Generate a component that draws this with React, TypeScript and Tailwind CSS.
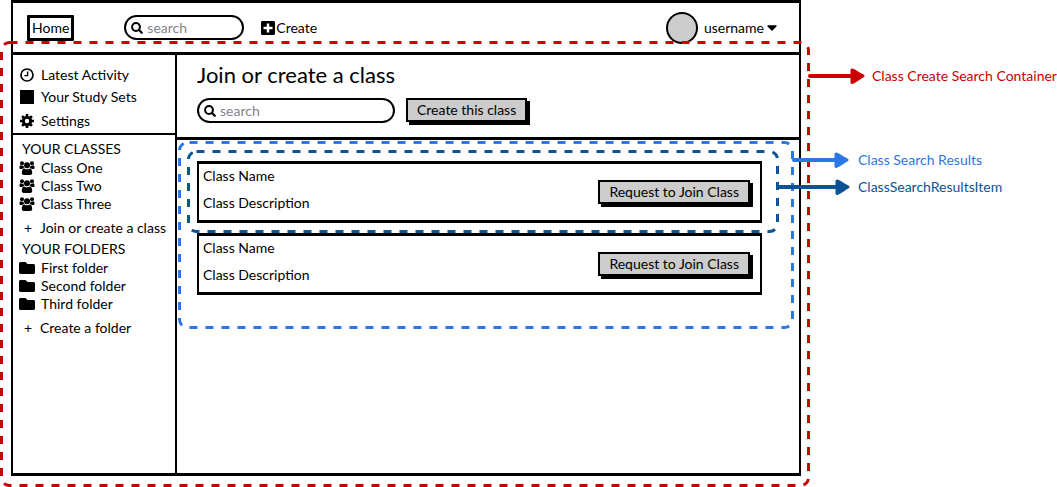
import type { ReactNode } from "react";
import { FaFolder, FaPlusSquare } from "react-icons/fa";

function DashedOutline({ className, phase }: { className: string; phase: number }) {
  return (
    <div className={`pointer-events-none absolute ${className}`} aria-hidden="true">
      <svg className="block h-full w-full overflow-visible" fill="none" stroke="currentColor" strokeWidth="3">
        <rect x="0.5" y="0.5" width="100%" height="100%" rx="8" strokeDasharray="8 8" strokeDashoffset={phase} />
      </svg>
    </div>
  );
}

function Arrow({ length }: { length: number }) {
  return (
    <svg width={length} height="18" viewBox={`0 0 ${length} 18`} className="shrink-0 overflow-visible" aria-hidden="true">
      <path d={`M1 9H${length - 10}`} stroke="currentColor" strokeWidth="4" strokeLinecap="round" />
      <path
        d={`M${length - 12} 3C${length - 9} 3.5 ${length - 6} 7 ${length - 1} 9C${length - 5} 11 ${length - 7} 13.5 ${length - 12} 15.5Z`}
        fill="currentColor"
        stroke="currentColor"
        strokeWidth="3"
        strokeLinejoin="round"
      />
    </svg>
  );
}

function ClockIcon() {
  return (
    <svg width="14" height="14" viewBox="0 0 14 14" fill="none" stroke="currentColor" strokeWidth="1.7" aria-hidden="true">
      <circle cx="7" cy="7" r="6" />
      <path d="M7.6 3.4V7.6H4.4" strokeWidth="1.4" />
    </svg>
  );
}

function GearIcon() {
  return (
    <svg width="14" height="14" viewBox="0 0 14 14" fill="none" stroke="currentColor" aria-hidden="true">
      <circle cx="7" cy="7" r="3.7" strokeWidth="3" />
      <path d="M7 0V3M7 11V14M0 7H3M11 7H14M2.05 2.05L4.2 4.2M9.8 9.8L11.95 11.95M2.05 11.95L4.2 9.8M9.8 4.2L11.95 2.05" strokeWidth="2.6" />
    </svg>
  );
}

function SearchIcon() {
  return (
    <svg width="12" height="12" viewBox="0 0 12 12" className="shrink-0" fill="none" stroke="currentColor" strokeWidth="2" strokeLinecap="round" aria-hidden="true">
      <circle cx="5" cy="5" r="3.9" />
      <path d="M8 8L10.8 10.8" strokeWidth="2.2" />
    </svg>
  );
}

function GroupIcon() {
  return (
    <svg width="16" height="14" viewBox="0 0 16 14" fill="currentColor" className="shrink-0 overflow-visible" aria-hidden="true">
      <circle cx="3" cy="2.2" r="2" />
      <circle cx="13" cy="2.2" r="2" />
      <circle cx="8" cy="4.2" r="3" />
      <path d="M0.5 6.4C0.5 5 0.9 4.3 1.6 4.3C2.4 4.9 3.6 4.9 4.5 4.4C4.5 5.6 4.8 6.4 5.4 7.1C4.4 7.2 3.7 7.4 3.2 8H1.8C0.9 8 0.5 7.5 0.5 6.4Z" />
      <path d="M15.5 6.4C15.5 5 15.1 4.3 14.4 4.3C13.6 4.9 12.4 4.9 11.5 4.4C11.5 5.6 11.2 6.4 10.6 7.1C11.6 7.2 12.3 7.4 12.8 8H14.2C15.1 8 15.5 7.5 15.5 6.4Z" />
      <path d="M2.8 12C2.8 9.3 3.7 7.4 5.3 7.4C6.2 8 7 8.3 8 8.3S9.8 8 10.7 7.4C12.3 7.4 13.2 9.3 13.2 12C13.2 13.3 12.4 14 11.2 14H4.8C3.6 14 2.8 13.3 2.8 12Z" />
    </svg>
  );
}

function SearchField({ className, label }: { className: string; label: string }) {
  return (
    <label className={`flex h-[25px] items-center gap-1 rounded-full border-2 border-black bg-white pl-[5px] ${className}`}>
      <SearchIcon />
      <input
        type="search"
        aria-label={label}
        placeholder="search"
        className="h-5 w-full min-w-0 bg-transparent pr-3 leading-5 outline-none placeholder:text-[#84848c]"
      />
    </label>
  );
}

function SketchButton({ children }: { children: ReactNode }) {
  return (
    <button className="h-6 shrink-0 border-2 border-black bg-[#cccccc] px-[9px] leading-5 shadow-[3px_3px_0_#000]">{children}</button>
  );
}

function NavItem({ icon, children }: { icon: ReactNode; children: ReactNode }) {
  return (
    <li>
      <a href="#" className="flex items-center gap-[6px] pl-[6px]">
        <span className="flex w-4 shrink-0 justify-center">{icon}</span>
        {children}
      </a>
    </li>
  );
}

function AddItem({ children }: { children: ReactNode }) {
  return (
    <a href="#" className="mt-[6px] flex gap-2 pl-[11px] whitespace-nowrap">
      <span className="w-2">+</span>
      {children}
    </a>
  );
}

const classes = ["Class One", "Class Two", "Class Three"];
const folders = ["First folder", "Second folder", "Third folder"];

function Header() {
  return (
    <header className="flex h-[52px] shrink-0 items-center border-b-[3px] border-black pr-[22px] pl-[14px]">
      <a href="#" className="h-[26px] rounded-[1px] border-[3px] border-black px-[2px] leading-5">Home</a>
      <SearchField className="ml-[50px] w-[120px]" label="Search sets" />
      <button className="ml-4 flex items-center">
        <FaPlusSquare className="size-4" aria-hidden="true" />
        Create
      </button>
      <div className="ml-auto flex items-center gap-[6px]">
        <span className="size-8 rounded-full border-2 border-black bg-[#cccccc]" />
        <button className="flex items-center gap-[3px]">
          username
          <svg width="10" height="6" viewBox="0 0 10 6" aria-hidden="true">
            <path d="M1 1H9L5 5Z" stroke="currentColor" strokeWidth="1.4" strokeLinejoin="round" />
          </svg>
        </button>
      </div>
    </header>
  );
}

function Sidebar() {
  return (
    <nav className="w-[164px] shrink-0 border-r-2 border-black">
      <div className="border-b-2 border-black pt-[11px] pb-[3px]">
        <ul className="flex flex-col gap-1">
          <NavItem icon={<ClockIcon />}>Latest Activity</NavItem>
          <NavItem icon={<span className="size-[14px] bg-black" />}>Your Study Sets</NavItem>
        </ul>
        <ul className="mt-[6px]">
          <NavItem icon={<GearIcon />}>Settings</NavItem>
        </ul>
      </div>
      <h2 className="mt-[5px] mb-px pl-[9px]">YOUR CLASSES</h2>
      <ul>
        {classes.map((name) => (
          <NavItem key={name} icon={<GroupIcon />}>{name}</NavItem>
        ))}
      </ul>
      <AddItem>Join or create a class</AddItem>
      <h2 className="mt-[3px] mb-px pl-[9px]">YOUR FOLDERS</h2>
      <ul>
        {folders.map((name) => (
          <NavItem key={name} icon={<FaFolder className="size-4" />}>{name}</NavItem>
        ))}
      </ul>
      <AddItem>Create a folder</AddItem>
    </nav>
  );
}

function ClassResult({ outlined }: { outlined: boolean }) {
  return (
    <li className="relative">
      <article className="flex h-[62px] items-start justify-between border-x-2 border-y-[3px] border-black pr-[10px] pl-1">
        <div className="flex flex-col gap-[9px] pt-[3px]">
          <h3>Class Name</h3>
          <p>Class Description</p>
        </div>
        <div className="pt-4">
          <SketchButton>Request to Join Class</SketchButton>
        </div>
      </article>
      {outlined && <DashedOutline className="-top-[10px] -right-[15px] -bottom-2 -left-[9px] text-[#0b5394]" phase={0} />}
    </li>
  );
}

export default function App() {
  return (
    <div className="relative flex min-h-screen bg-white pb-[11px] pl-[11px] font-['Lato',sans-serif] text-[14px] leading-[18px] text-black">
      <div className="flex min-w-0 flex-1 flex-col border-x-2 border-y-[3px] border-black">
        <Header />
        <div className="flex flex-1">
          <Sidebar />
          <main className="min-w-0 flex-1">
            <section className="border-b-[3px] border-black pt-2 pb-[14px] pl-5">
              <h1 className="text-[22px] leading-6">Join or create a class</h1>
              <form className="mt-[11px] flex items-start gap-[11px]" onSubmit={(e) => e.preventDefault()}>
                <SearchField className="w-[198px]" label="Search classes" />
                <SketchButton>Create this class</SketchButton>
              </form>
            </section>
            <section className="relative mt-[2px] mr-[7px] ml-[2px] pt-[19px] pr-[30px] pb-8 pl-[18px]">
              <ul className="flex flex-col gap-[10px]">
                <ClassResult outlined />
                <ClassResult outlined={false} />
              </ul>
              <DashedOutline className="inset-0 text-[#2b78e4]" phase={-2} />
            </section>
          </main>
        </div>
      </div>

      <aside className="relative z-10 flex w-64 shrink-0 flex-col pt-[67px] whitespace-nowrap">
        <p className="ml-2 flex items-center gap-2 text-[#cc0000]">
          <Arrow length={55} />
          Class Create Search Container
        </p>
        <p className="mt-[66px] -ml-2 flex items-center gap-[10px] text-[#2b78e4]">
          <Arrow length={55} />
          Class Search Results
        </p>
        <p className="mt-[9px] -ml-6 flex items-center gap-[9px] text-[#0b5394]">
          <Arrow length={72} />
          ClassSearchResultsItem
        </p>
      </aside>
      <DashedOutline className="top-[42px] right-[249px] bottom-[2px] left-px text-[#cc0000]" phase={0} />
    </div>
  );
}
